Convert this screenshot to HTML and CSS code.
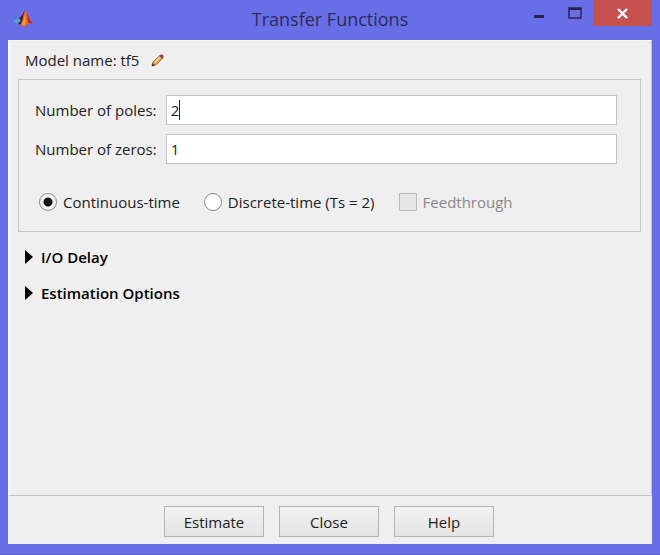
FILE: index.html
```html
<!DOCTYPE html>
<html lang="en">
<head>
  <meta charset="UTF-8">
  <meta name="viewport" content="width=device-width, initial-scale=1.0">
  <title>Transfer Functions</title>
  <link rel="stylesheet" href="styles.css">
</head>
<body>

<div class="window">
  <header class="titlebar">
    <svg class="logo" viewBox="0 0 20 20" width="20" height="20" aria-hidden="true">
      <path d="M0 12 L6 9 L9 12 L5 15 Z" fill="#4aa3d8"/>
      <path d="M6 9 C9 8 10 4 12 1 L11 12 L7 16 L5 14 L8 12 Z" fill="#4a1c22"/>
      <path d="M12 1 C14 3 16 10 20 15 C17 13 14 15 11 19 C10 17 9 16 7 16 C10 13 10 5 12 1 Z" fill="#e8662a"/>
      <path d="M12 5 C13 8 13 11 12 16 C11 17 10 16 9 15 C11 12 11 9 12 5 Z" fill="#f9a03c"/>
      <path d="M14 4 C16 8 17 12 20 15 C18 14 16 14 15 14 Z" fill="#a8303a"/>
    </svg>
    <h1 class="title">Transfer Functions</h1>
    <div class="controls">
      <button class="control" aria-label="Minimize">
        <svg viewBox="0 0 14 14" width="14" height="14"><path d="M2 9h10v3H2z" fill="#24244e"/></svg>
      </button>
      <button class="control" aria-label="Maximize">
        <svg viewBox="0 0 14 14" width="14" height="14"><path d="M1 2h12v10H1z" fill="none" stroke="#24244e" stroke-width="1.5"/><path d="M1 2h12v2H1z" fill="#24244e"/></svg>
      </button>
      <button class="control close" aria-label="Close window">
        <svg viewBox="0 0 14 14" width="14" height="14"><path d="M2 3l9 9M11 3l-9 9" stroke="#fff" stroke-width="2.4"/></svg>
      </button>
    </div>
  </header>

  <main class="content">
    <div class="model">
      <span>Model name: tf5</span>
      <button class="edit" aria-label="Edit model name">
        <svg viewBox="0 0 14 14" width="13" height="13">
          <path d="M1 13 L2 9 L10 1 L13 4 L5 12 Z" fill="#e9a64a" stroke="#8a6844" stroke-width="1"/>
          <path d="M9 2 L10 1 Q12 0 13 1 Q14 3 13 4 L12 5 Z" fill="#7a4650"/>
          <path d="M1 13 L2 10 L4 12 Z" fill="#222"/>
          <path d="M4 9 L9 4" stroke="#fbd794" stroke-width="1.5"/>
        </svg>
      </button>
    </div>

    <form class="panel">
      <div class="fields">
        <label for="poles">Number of poles:</label>
        <div class="field-box">
          <input type="text" class="field" id="poles" value="2">
          <span class="caret"></span>
        </div>
        <label for="zeros">Number of zeros:</label>
        <div class="field-box">
          <input type="text" class="field" id="zeros" value="1">
        </div>
      </div>
      <div class="options">
        <label class="option"><input type="radio" class="radio" name="time" checked>Continuous-time</label>
        <label class="option"><input type="radio" class="radio" name="time">Discrete-time (Ts = 2)</label>
        <label class="option disabled"><input type="checkbox" class="check" disabled>Feedthrough</label>
      </div>
    </form>

    <details class="section">
      <summary>I/O Delay</summary>
    </details>
    <details class="section">
      <summary>Estimation Options</summary>
    </details>
  </main>

  <footer class="footer">
    <button class="button">Estimate</button>
    <button class="button">Close</button>
    <button class="button">Help</button>
  </footer>
</div>

</body>
</html>
```
FILE: styles.css
```css
* {
  box-sizing: border-box;
}

body {
  margin: 0;
  font-family: "Open Sans", "Noto Sans", sans-serif;
  font-size: 15px;
  line-height: 20px;
  color: #222;
}

button,
input {
  font: inherit;
  color: inherit;
}

.window {
  display: flex;
  flex-direction: column;
  min-height: 100vh;
  padding: 0 8px 10px;
  background-color: #686ee6;
  border-bottom: 1px solid #5a60cc;
}

.titlebar {
  display: grid;
  grid-template-columns: 1fr auto 1fr;
  align-items: start;
  height: 40px;
}

.logo {
  margin: 9px 0 0 5px;
}

.title {
  margin: 6px 0 0;
  font-size: 18px;
  line-height: 26px;
  font-weight: normal;
  color: #2a2c5c;
}

.controls {
  display: flex;
  justify-content: flex-end;
}

.control {
  display: flex;
  justify-content: center;
  align-items: center;
  width: 36px;
  height: 26px;
  padding: 0;
  border: none;
  background: none;
}

.control.close {
  width: 59px;
  background-color: #c75050;
}

.content {
  flex: 1;
  padding: 9px 10px 0 8px;
  background-color: #efefef;
  border: 1px solid #c4c4c8;
  border-top-color: #fafaf6;
  border-left: 2px solid #fafafa;
}

.model {
  display: flex;
  align-items: center;
  gap: 12px;
  padding-left: 7px;
}

.edit {
  display: flex;
  padding: 0;
  border: none;
  background: none;
}

.panel {
  margin: 9px 0 15px;
  padding: 15px 23px 19px 16px;
  border: 1px solid #c6c6c6;
}

.fields {
  display: grid;
  grid-template-columns: auto 1fr;
  gap: 9px;
  align-items: center;
}

.field-box {
  position: relative;
}

.field {
  display: block;
  width: 100%;
  height: 30px;
  padding: 0 4px;
  border: 1px solid #c2c4c6;
  background-color: #fff;
}

.caret {
  position: absolute;
  top: 5px;
  left: 13px;
  width: 1px;
  height: 20px;
  background-color: #222;
}

.options {
  display: flex;
  gap: 24px;
  margin: 28px 0 0 4px;
}

.option {
  display: flex;
  align-items: center;
  gap: 6px;
}

.disabled {
  color: #888;
}

.radio,
.check {
  appearance: none;
  width: 18px;
  height: 18px;
  margin: 0;
  border: 1px solid #8c8c8c;
  background-color: #fff;
}

.radio {
  border-radius: 50%;
}

.radio:checked {
  background: radial-gradient(circle, #111 4px, #f2f2f2 5px);
}

.check {
  border-color: #bcbcbc;
  background-color: #e6e6e6;
}

.section {
  margin-bottom: 16px;
  padding-left: 7px;
  font-weight: 600;
  color: #000;
}

.section summary {
  display: flex;
  align-items: center;
  gap: 8px;
}

.section summary::before {
  content: "";
  border: solid transparent;
  border-width: 7px 0 7px 8px;
  border-left-color: #000;
}

.footer {
  display: flex;
  justify-content: center;
  gap: 15px;
  padding: 10px 2px 7px 0;
  background-color: #efefef;
}

.button {
  width: 100px;
  height: 31px;
  padding: 0;
  border: 1px solid #b4b4b4;
  background: linear-gradient(#f2f2f2, #e4e4e4);
}
```
